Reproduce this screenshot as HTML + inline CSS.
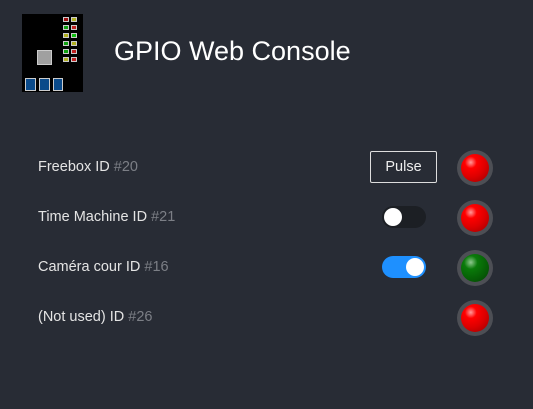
<!DOCTYPE html>
<html><head><style>
body{margin:0;width:533px;height:409px;background:#282c35;font-family:"Liberation Sans",sans-serif;position:relative;overflow:hidden}
.a{position:absolute}
.lbl{position:absolute;left:38px;font-size:14.5px;color:#e4e4e4}
.lbl span{color:#7c7f86}
.led{position:absolute;left:457px;width:36px;height:36px;border-radius:50%;background:#4d4f55}
.led i{position:absolute;left:4px;top:4px;width:28px;height:28px;border-radius:50%}
.red i{background:radial-gradient(circle at 35% 30%,#ff9a9a 0,#f00 22%,#d00 55%,#900 100%)}
.grn i{background:radial-gradient(circle at 35% 30%,#8fc88f 0,#0a7a0a 25%,#066006 60%,#034003 100%)}
.tg{position:absolute;left:382px;width:44px;height:22px;border-radius:11px}
.tg b{position:absolute;top:2px;width:18px;height:18px;border-radius:50%;background:#fff}
</style></head><body>
<svg class="a" style="left:22px;top:14px" width="61" height="78">
<rect width="61" height="78" fill="#000"/>
<g stroke="#ccc" stroke-width="1">
<rect x="41.5" y="3.5" width="5" height="4" fill="#a01010"/><rect x="49.5" y="3.5" width="5" height="4" fill="#b0b020"/>
<rect x="41.5" y="11.5" width="5" height="4" fill="#10a010"/><rect x="49.5" y="11.5" width="5" height="4" fill="#c02020"/>
<rect x="41.5" y="19.5" width="5" height="4" fill="#b0b020"/><rect x="49.5" y="19.5" width="5" height="4" fill="#10c010"/>
<rect x="41.5" y="27.5" width="5" height="4" fill="#10a010"/><rect x="49.5" y="27.5" width="5" height="4" fill="#b0b020"/>
<rect x="41.5" y="35.5" width="5" height="4" fill="#10a010"/><rect x="49.5" y="35.5" width="5" height="4" fill="#c02020"/>
<rect x="41.5" y="43.5" width="5" height="4" fill="#b0b020"/><rect x="49.5" y="43.5" width="5" height="4" fill="#c02020"/>
<rect x="15.5" y="36.5" width="14" height="14" fill="#a0a0a0"/>
<rect x="3.5" y="64.5" width="10" height="12" fill="#0a4a8a"/>
<rect x="17.5" y="64.5" width="10" height="12" fill="#0a4a8a"/>
<rect x="31.5" y="64.5" width="9" height="12" fill="#0a4a8a"/>
</g></svg>
<div class="a" style="left:114px;top:36px;font-size:27px;color:#fff">GPIO Web Console</div>
<div class="lbl" style="top:159px">Freebox ID <span>#20</span></div>
<div class="lbl" style="top:209px">Time Machine ID <span>#21</span></div>
<div class="lbl" style="top:259px">Caméra cour ID <span>#16</span></div>
<div class="lbl" style="top:309px">(Not used) ID <span>#26</span></div>
<div class="a" style="left:370px;top:151px;width:65px;height:30px;border:1px solid #ddd;border-radius:2px;color:#eee;font-size:14.5px;text-align:center;line-height:30px">Pulse</div>
<div class="tg" style="top:206px;background:#1c1f24"><b style="left:2px"></b></div>
<div class="tg" style="top:256px;background:#1e90ff"><b style="left:24px"></b></div>
<div class="led red" style="top:150px"><i></i></div>
<div class="led red" style="top:200px"><i></i></div>
<div class="led grn" style="top:250px"><i></i></div>
<div class="led red" style="top:300px"><i></i></div>
</body></html>
